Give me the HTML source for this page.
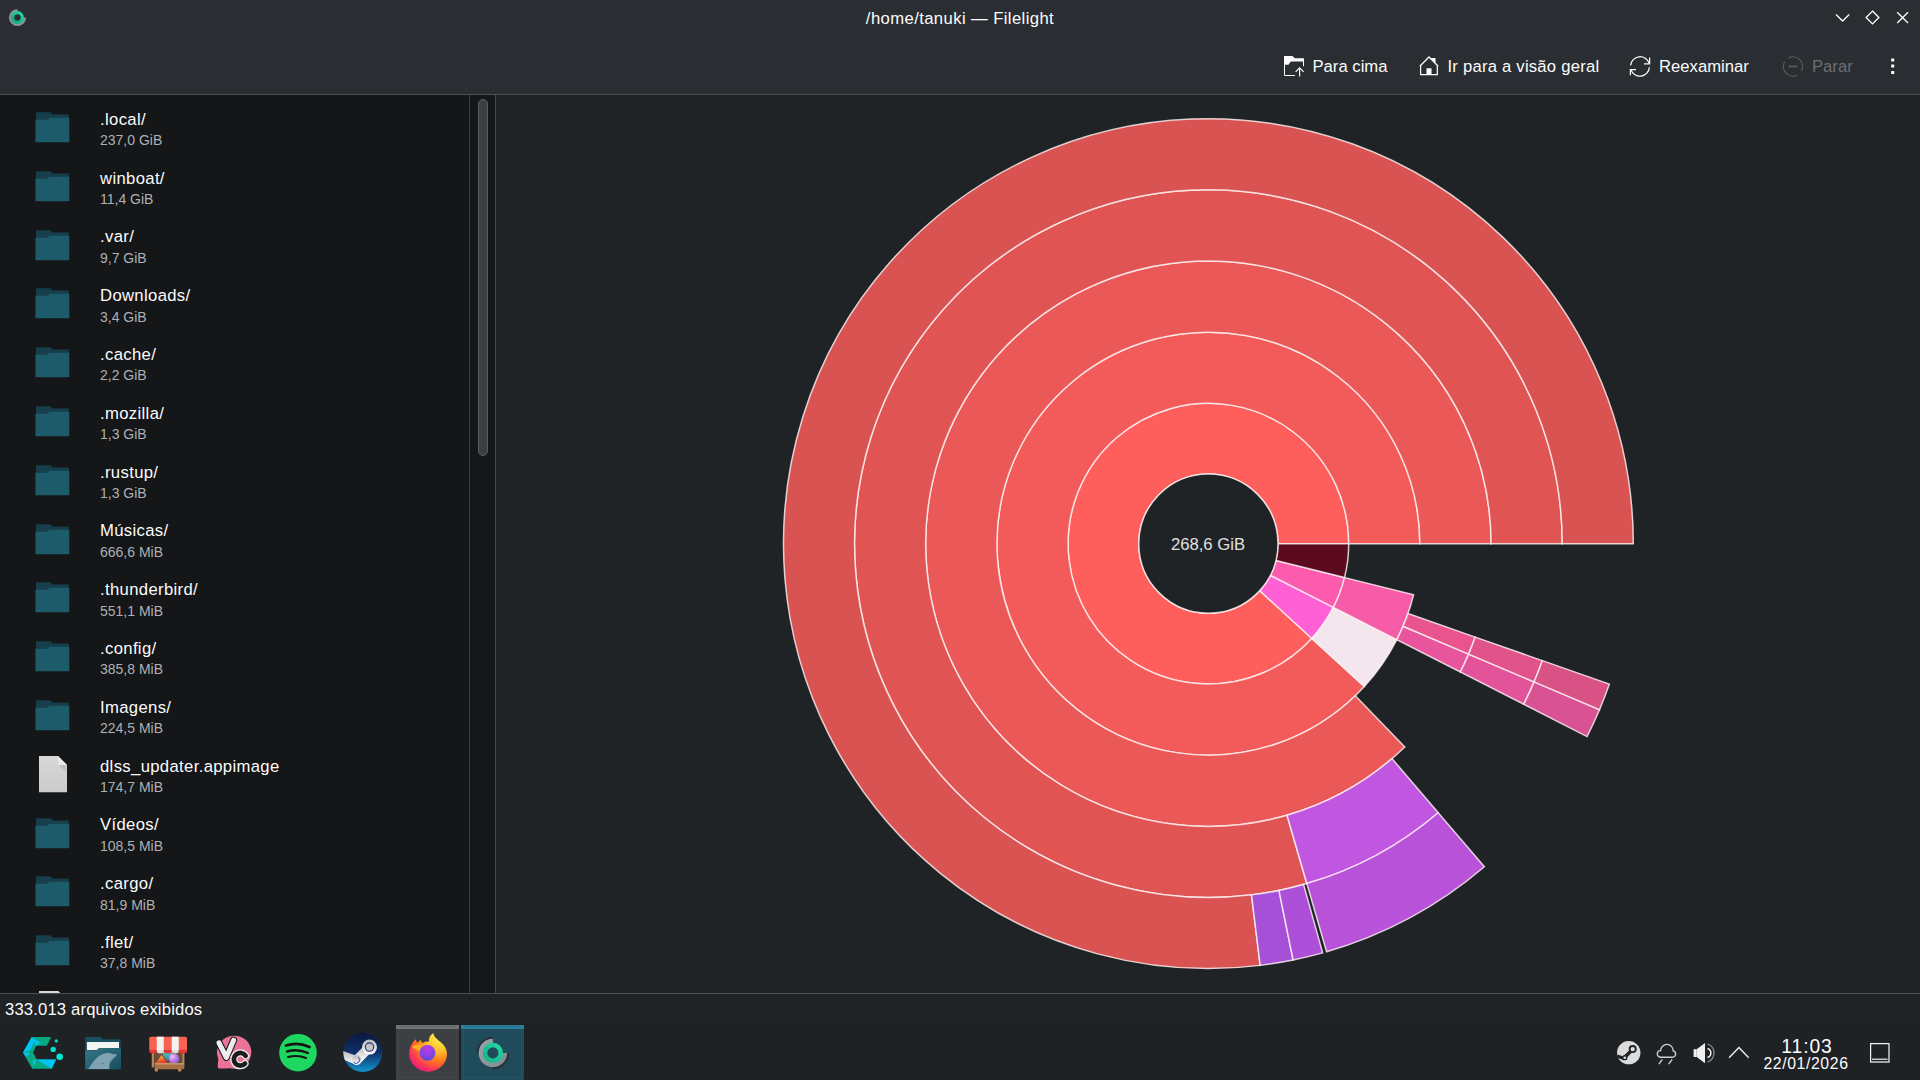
<!DOCTYPE html>
<html><head><meta charset="utf-8">
<style>
*{margin:0;padding:0;box-sizing:border-box}
html,body{width:1920px;height:1080px;overflow:hidden;background:#202326;font-family:"Liberation Sans",sans-serif;color:#fcfcfc}
.abs{position:absolute}
.t{position:absolute;white-space:nowrap;line-height:1.15;font-size:16.67px}
#hdr{left:0;top:0;width:1920px;height:94px;background:#2a2e32}
#hline{left:0;top:94px;width:1920px;height:1px;background:#4b4f54}
#list{left:0;top:95px;width:469px;height:898px;background:#141618;overflow:hidden}
#vl1{left:469px;top:95px;width:1px;height:898px;background:#3b3e42}
#sb{left:470px;top:95px;width:25px;height:898px;background:#161719}
#vl2{left:495px;top:95px;width:1px;height:898px;background:#45494d}
#thumb{left:478px;top:99px;width:9.6px;height:357px;border-radius:5px;background:#3d3e40;border:1px solid #5b5d5f}
#bline{left:0;top:993px;width:1920px;height:1px;background:#4b4f54}
#status{left:0;top:994px;width:1920px;height:86px;background:#202326}
.nm{position:absolute;left:100px;white-space:nowrap;font-size:16.67px;line-height:19px;letter-spacing:0.35px;color:#fcfcfc}
.sz{position:absolute;left:100px;white-space:nowrap;font-size:14px;line-height:16px;color:#adb1b5}
.fold{position:absolute;left:35px;width:35px;height:31px}
.tb{position:absolute;top:57.1px;white-space:nowrap;font-size:16.67px;line-height:19px;color:#fcfcfc}
</style></head>
<body>
<div id="hdr" class="abs"></div>
<div id="hline" class="abs"></div>
<div id="list" class="abs"></div>
<div id="vl1" class="abs"></div>
<div id="sb" class="abs"></div>
<div id="vl2" class="abs"></div>
<div id="thumb" class="abs"></div>
<div id="bline" class="abs"></div>
<div id="status" class="abs"></div>

<!-- title bar -->
<svg class="abs" style="left:0;top:0" width="36" height="36" viewBox="0 0 36 36">
  <defs><linearGradient id="apg" x1="1" y1="0" x2="0" y2="1"><stop offset="0" stop-color="#25e3b4"/><stop offset="1" stop-color="#0a9e72"/></linearGradient></defs>
  <path d="M17.5 8.9 A8.6 8.6 0 1 0 26.1 17.5 L17.5 17.5 Z" fill="#8a949b"/>
  <circle cx="17.5" cy="17.5" r="6.4" fill="url(#apg)"/>
  <circle cx="17.5" cy="17.5" r="3.2" fill="#2a2e32"/>
</svg>
<div class="t" style="left:0;width:1920px;top:9.2px;text-align:center;font-size:16.67px;letter-spacing:0.4px;color:#fcfcfc">/home/tanuki — Filelight</div>
<svg class="abs" style="left:1820px;top:0" width="100" height="35" viewBox="0 0 100 35" fill="none" stroke="#fcfcfc" stroke-width="1.35">
  <path d="M16 14.5 L22.6 21.1 L29.2 14.5"/>
  <path d="M52.5 11.1 L58.9 17.5 L52.5 23.9 L46.1 17.5 Z"/>
  <path d="M77.2 12.2 L88 23 M88 12.2 L77.2 23"/>
</svg>

<!-- toolbar -->
<svg class="abs" style="left:1284px;top:56px" width="21" height="21" viewBox="0 0 21 21">
  <path d="M0 0 H8.4 L10.9 2.2 H20 V5.6 H6.9 L4.4 8.75 H0 Z" fill="#fcfcfc"/>
  <path d="M0.5 8 V19.5 H10.9 M19.5 5 V10.3" fill="none" stroke="#fcfcfc" stroke-width="1"/><path d="M15.6 20.5 V12 M11.6 15.8 L15.6 11.8 L19.6 15.8" fill="none" stroke="#fcfcfc" stroke-width="1.2"/>
</svg>
<div class="tb" style="left:1312.5px">Para cima</div>
<svg class="abs" style="left:1419px;top:56px" width="21" height="21" viewBox="0 0 21 21">
  <path d="M0.8 10.2 L10 1.0 L19.2 10.2 M1.6 9.5 V18.7 H18.3 V9.5" fill="none" stroke="#fcfcfc" stroke-width="1.25"/>
  <path d="M12.2 3.2 V2 H16.5 V7.5 Z" fill="#fcfcfc"/>
  <rect x="7.5" y="12.3" width="5" height="6.6" fill="#fcfcfc"/>
</svg>
<div class="tb" style="left:1447.5px;letter-spacing:0.22px">Ir para a visão geral</div>
<svg class="abs" style="left:1629px;top:55.5px" width="22" height="21" viewBox="0 0 22 21" fill="none" stroke="#fcfcfc" stroke-width="1.25">
  <path d="M1.6 9.4 A9.5 9.5 0 0 1 20.1 7.3"/>
  <path d="M20.6 1.6 V7.8 H14.9"/>
  <path d="M20.4 11.2 A9.5 9.5 0 0 1 1.9 13.6"/>
  <path d="M1.4 19.2 V13.7 H7"/>
</svg>
<div class="tb" style="left:1659px">Reexaminar</div>
<svg class="abs" style="left:1782px;top:55.5px" width="22" height="22" viewBox="0 0 22 22" fill="none" stroke="#5b5d60" stroke-width="1.15">
  <path d="M6.35 2.1 A9.6 9.6 0 0 1 19.48 15.0"/>
  <path d="M15.5 18.98 A9.6 9.6 0 0 1 2.69 5.7"/>
  <rect x="6.7" y="9.6" width="8.7" height="1.7" fill="#5b5d60" stroke="none"/>
</svg>
<div class="tb" style="left:1812px;color:#6b6e71">Parar</div>
<svg class="abs" style="left:1888.5px;top:56.5px" width="7" height="18" viewBox="0 0 7 18" fill="#fcfcfc">
  <rect x="2.2" y="1.5" width="3" height="3"/>
  <rect x="2.2" y="7.5" width="3" height="3"/>
  <rect x="2.2" y="14" width="3" height="3"/>
</svg>

<!-- LIST -->
<div class="abs" style="left:0;top:95px;width:469px;height:898px;overflow:hidden"><div class="abs" style="left:0;top:-95px;width:469px;height:1080px"><svg class="fold" style="top:112.0px" width="35" height="31" viewBox="0 0 35 31"><path d="M1 0.3 H15.5 L17.5 2.6 H33.8 V12 H1 Z" fill="#163e4b"/><path d="M0.4 7.8 H12 L14.6 5.8 H34.3 V30.3 H0.4 Z" fill="#1d5a6a"/></svg>
<div class="nm" style="top:109.8px">.local/</div>
<div class="sz" style="top:132.2px">237,0 GiB</div>
<svg class="fold" style="top:170.8px" width="35" height="31" viewBox="0 0 35 31"><path d="M1 0.3 H15.5 L17.5 2.6 H33.8 V12 H1 Z" fill="#163e4b"/><path d="M0.4 7.8 H12 L14.6 5.8 H34.3 V30.3 H0.4 Z" fill="#1d5a6a"/></svg>
<div class="nm" style="top:168.6px">winboat/</div>
<div class="sz" style="top:191.0px">11,4 GiB</div>
<svg class="fold" style="top:229.6px" width="35" height="31" viewBox="0 0 35 31"><path d="M1 0.3 H15.5 L17.5 2.6 H33.8 V12 H1 Z" fill="#163e4b"/><path d="M0.4 7.8 H12 L14.6 5.8 H34.3 V30.3 H0.4 Z" fill="#1d5a6a"/></svg>
<div class="nm" style="top:227.4px">.var/</div>
<div class="sz" style="top:249.8px">9,7 GiB</div>
<svg class="fold" style="top:288.4px" width="35" height="31" viewBox="0 0 35 31"><path d="M1 0.3 H15.5 L17.5 2.6 H33.8 V12 H1 Z" fill="#163e4b"/><path d="M0.4 7.8 H12 L14.6 5.8 H34.3 V30.3 H0.4 Z" fill="#1d5a6a"/></svg>
<div class="nm" style="top:286.2px">Downloads/</div>
<div class="sz" style="top:308.6px">3,4 GiB</div>
<svg class="fold" style="top:347.2px" width="35" height="31" viewBox="0 0 35 31"><path d="M1 0.3 H15.5 L17.5 2.6 H33.8 V12 H1 Z" fill="#163e4b"/><path d="M0.4 7.8 H12 L14.6 5.8 H34.3 V30.3 H0.4 Z" fill="#1d5a6a"/></svg>
<div class="nm" style="top:345.0px">.cache/</div>
<div class="sz" style="top:367.4px">2,2 GiB</div>
<svg class="fold" style="top:406.0px" width="35" height="31" viewBox="0 0 35 31"><path d="M1 0.3 H15.5 L17.5 2.6 H33.8 V12 H1 Z" fill="#163e4b"/><path d="M0.4 7.8 H12 L14.6 5.8 H34.3 V30.3 H0.4 Z" fill="#1d5a6a"/></svg>
<div class="nm" style="top:403.8px">.mozilla/</div>
<div class="sz" style="top:426.2px">1,3 GiB</div>
<svg class="fold" style="top:464.8px" width="35" height="31" viewBox="0 0 35 31"><path d="M1 0.3 H15.5 L17.5 2.6 H33.8 V12 H1 Z" fill="#163e4b"/><path d="M0.4 7.8 H12 L14.6 5.8 H34.3 V30.3 H0.4 Z" fill="#1d5a6a"/></svg>
<div class="nm" style="top:462.6px">.rustup/</div>
<div class="sz" style="top:485.0px">1,3 GiB</div>
<svg class="fold" style="top:523.6px" width="35" height="31" viewBox="0 0 35 31"><path d="M1 0.3 H15.5 L17.5 2.6 H33.8 V12 H1 Z" fill="#163e4b"/><path d="M0.4 7.8 H12 L14.6 5.8 H34.3 V30.3 H0.4 Z" fill="#1d5a6a"/></svg>
<div class="nm" style="top:521.4px">Músicas/</div>
<div class="sz" style="top:543.8px">666,6 MiB</div>
<svg class="fold" style="top:582.4px" width="35" height="31" viewBox="0 0 35 31"><path d="M1 0.3 H15.5 L17.5 2.6 H33.8 V12 H1 Z" fill="#163e4b"/><path d="M0.4 7.8 H12 L14.6 5.8 H34.3 V30.3 H0.4 Z" fill="#1d5a6a"/></svg>
<div class="nm" style="top:580.2px">.thunderbird/</div>
<div class="sz" style="top:602.6px">551,1 MiB</div>
<svg class="fold" style="top:641.2px" width="35" height="31" viewBox="0 0 35 31"><path d="M1 0.3 H15.5 L17.5 2.6 H33.8 V12 H1 Z" fill="#163e4b"/><path d="M0.4 7.8 H12 L14.6 5.8 H34.3 V30.3 H0.4 Z" fill="#1d5a6a"/></svg>
<div class="nm" style="top:639.0px">.config/</div>
<div class="sz" style="top:661.4px">385,8 MiB</div>
<svg class="fold" style="top:700.0px" width="35" height="31" viewBox="0 0 35 31"><path d="M1 0.3 H15.5 L17.5 2.6 H33.8 V12 H1 Z" fill="#163e4b"/><path d="M0.4 7.8 H12 L14.6 5.8 H34.3 V30.3 H0.4 Z" fill="#1d5a6a"/></svg>
<div class="nm" style="top:697.8px">Imagens/</div>
<div class="sz" style="top:720.2px">224,5 MiB</div>
<svg class="abs" style="left:38.5px;top:755.5px" width="28" height="37" viewBox="0 0 28 37"><defs><linearGradient id="fgr11" x1="0" y1="0" x2="0" y2="1"><stop offset="0" stop-color="#d8d8d8"/><stop offset="1" stop-color="#cbcbcb"/></linearGradient></defs><path d="M0 0 H19 L28 9 V36.2 H0 Z" fill="url(#fgr11)"/><path d="M19 9 H28 L27 16 Z" fill="#b9b9b9" opacity="0.7"/><path d="M19 0 V9 H28 Z" fill="#e9e9e9"/></svg>
<div class="nm" style="top:756.6px">dlss_updater.appimage</div>
<div class="sz" style="top:779.0px">174,7 MiB</div>
<svg class="fold" style="top:817.6px" width="35" height="31" viewBox="0 0 35 31"><path d="M1 0.3 H15.5 L17.5 2.6 H33.8 V12 H1 Z" fill="#163e4b"/><path d="M0.4 7.8 H12 L14.6 5.8 H34.3 V30.3 H0.4 Z" fill="#1d5a6a"/></svg>
<div class="nm" style="top:815.4px">Vídeos/</div>
<div class="sz" style="top:837.8px">108,5 MiB</div>
<svg class="fold" style="top:876.4px" width="35" height="31" viewBox="0 0 35 31"><path d="M1 0.3 H15.5 L17.5 2.6 H33.8 V12 H1 Z" fill="#163e4b"/><path d="M0.4 7.8 H12 L14.6 5.8 H34.3 V30.3 H0.4 Z" fill="#1d5a6a"/></svg>
<div class="nm" style="top:874.2px">.cargo/</div>
<div class="sz" style="top:896.6px">81,9 MiB</div>
<svg class="fold" style="top:935.2px" width="35" height="31" viewBox="0 0 35 31"><path d="M1 0.3 H15.5 L17.5 2.6 H33.8 V12 H1 Z" fill="#163e4b"/><path d="M0.4 7.8 H12 L14.6 5.8 H34.3 V30.3 H0.4 Z" fill="#1d5a6a"/></svg>
<div class="nm" style="top:933.0px">.flet/</div>
<div class="sz" style="top:955.4px">37,8 MiB</div>
<svg class="abs" style="left:38.5px;top:990.7px" width="28" height="37" viewBox="0 0 28 37"><defs><linearGradient id="fgr15" x1="0" y1="0" x2="0" y2="1"><stop offset="0" stop-color="#d8d8d8"/><stop offset="1" stop-color="#cbcbcb"/></linearGradient></defs><path d="M0 0 H19 L28 9 V36.2 H0 Z" fill="url(#fgr15)"/><path d="M19 9 H28 L27 16 Z" fill="#b9b9b9" opacity="0.7"/><path d="M19 0 V9 H28 Z" fill="#e9e9e9"/></svg></div></div>

<!-- CHART -->
<svg width="1920" height="1080" style="position:absolute;left:0;top:0"><g stroke="rgba(255,245,245,0.8)" stroke-width="1.5" stroke-linejoin="miter"><path d="M1348.70 543.65A140.3 140.3 0 1 0 1311.84 638.44L1259.71 590.67A69.6 69.6 0 1 1 1278.00 543.65Z" fill="#fe5f5c"/><path d="M1311.84 638.44A140.3 140.3 0 0 0 1333.41 607.34L1270.41 575.25A69.6 69.6 0 0 1 1259.71 590.67Z" fill="#ff60d6"/><path d="M1333.41 607.34A140.3 140.3 0 0 0 1344.53 577.59L1275.93 560.49A69.6 69.6 0 0 1 1270.41 575.25Z" fill="#fd5cae"/><path d="M1344.53 577.59A140.3 140.3 0 0 0 1348.70 543.65L1278.00 543.65A69.6 69.6 0 0 1 1275.93 560.49Z" fill="#5c0a1e"/><path d="M1419.85 543.65A211.45 211.45 0 1 0 1364.30 686.50L1311.84 638.44A140.3 140.3 0 1 1 1348.70 543.65Z" fill="#f35b5a"/><path d="M1364.30 686.50A211.45 211.45 0 0 0 1396.80 639.65L1333.41 607.34A140.3 140.3 0 0 1 1311.84 638.44Z" fill="#f3e6ee"/><path d="M1396.80 639.65A211.45 211.45 0 0 0 1413.57 594.80L1344.53 577.59A140.3 140.3 0 0 1 1333.41 607.34Z" fill="#f55ba6"/><path d="M1491.10 543.65A282.7 282.7 0 1 0 1404.78 747.01L1355.29 695.75A211.45 211.45 0 1 1 1419.85 543.65Z" fill="#ea5857"/><path d="M1460.29 671.99A282.7 282.7 0 0 0 1468.63 654.11L1403.04 626.27A211.45 211.45 0 0 1 1396.80 639.65Z" fill="#e8559d"/><path d="M1468.63 654.11A282.7 282.7 0 0 0 1475.21 637.09L1407.97 613.54A211.45 211.45 0 0 1 1403.04 626.27Z" fill="#e9548e"/><path d="M1562.25 543.65A353.85 353.85 0 1 0 1306.82 883.54L1287.03 815.19A282.7 282.7 0 1 1 1491.10 543.65Z" fill="#e15454"/><path d="M1306.82 883.54A353.85 353.85 0 0 0 1438.21 812.72L1392.00 758.62A282.7 282.7 0 0 1 1287.03 815.19Z" fill="#c156e0"/><path d="M1523.68 704.29A353.85 353.85 0 0 0 1534.12 681.91L1468.63 654.11A282.7 282.7 0 0 1 1460.29 671.99Z" fill="#e2539a"/><path d="M1534.12 681.91A353.85 353.85 0 0 0 1542.36 660.60L1475.21 637.09A282.7 282.7 0 0 1 1468.63 654.11Z" fill="#e0538a"/><path d="M1633.30 543.65A424.9 424.9 0 1 0 1260.18 965.38L1251.52 894.86A353.85 353.85 0 1 1 1562.25 543.65Z" fill="#d85352"/><path d="M1260.18 965.38A424.9 424.9 0 0 0 1293.11 960.02L1278.95 890.40A353.85 353.85 0 0 1 1251.52 894.86Z" fill="#a650d8"/><path d="M1293.11 960.02A424.9 424.9 0 0 0 1322.66 952.90L1303.56 884.47A353.85 353.85 0 0 1 1278.95 890.40Z" fill="#ad4fd9"/><path d="M1326.59 951.78A424.9 424.9 0 0 0 1484.35 866.75L1438.21 812.72A353.85 353.85 0 0 1 1306.82 883.54Z" fill="#b853d9"/><path d="M1586.99 736.55A424.9 424.9 0 0 0 1599.52 709.67L1534.12 681.91A353.85 353.85 0 0 1 1523.68 704.29Z" fill="#d95394"/><path d="M1599.52 709.67A424.9 424.9 0 0 0 1609.42 684.09L1542.36 660.60A353.85 353.85 0 0 1 1534.12 681.91Z" fill="#d85286"/></g><circle cx="1208.4" cy="543.65" r="69.6" fill="#202326" stroke="rgba(255,245,245,0.8)" stroke-width="1.5"/></svg>
<div class="t" style="left:1108px;width:200px;top:535px;text-align:center;color:#e0e0e0">268,6 GiB</div>

<!-- status -->
<div class="t" style="left:5px;top:1000.3px;letter-spacing:0.15px">333.013 arquivos exibidos</div>

<!-- taskbar -->
<div class="abs" style="left:0;top:1025px;width:1920px;height:55px;background:#1f2225"></div>
<div class="abs" style="left:0;top:1021px;width:1920px;height:4px;background:linear-gradient(to bottom,rgba(0,0,0,0),rgba(0,0,0,0.07))"></div>
<!-- C hex icon -->
<svg class="abs" style="left:18px;top:1030px" width="50" height="45" viewBox="0 0 50 45">
  <path d="M13.75 7.1 H33.3 L28.75 15.8 H18.3 L15 22.5 L18.75 29.6 H38.1 L33.75 38.75 H14.2 L5 22.5 Z" fill="#0aa882"/>
  <path d="M13.75 7.1 L5 22.5 L12.5 20 L17 10 Z" fill="#00c4f5"/>
  <path d="M14.5 8 L22.5 12.5 L18.3 15.8 Z" fill="#00c4f5"/>
  <path d="M18.75 29.6 H38.1 L33.75 38.75 Z" fill="#00c4f5"/>
  <path d="M18.75 29.6 L14.8 38 L15.2 30.5 Z" fill="#00c4f5"/>
  <path d="M5 22.5 L12.5 23 L8 27 Z" fill="#00c4f5"/>
  <circle cx="38.3" cy="11" r="1.7" fill="#00d8c8"/>
  <circle cx="35.2" cy="19.4" r="2.7" fill="#00e0cc"/>
  <circle cx="41.7" cy="26.7" r="3.3" fill="#00e8cc"/>
</svg>
<!-- dolphin -->
<svg class="abs" style="left:80px;top:1030px" width="50" height="45" viewBox="0 0 50 45">
  <defs><linearGradient id="dg" x1="0" y1="0" x2="1" y2="1"><stop offset="0" stop-color="#357787"/><stop offset="1" stop-color="#174e60"/></linearGradient></defs>
  <path d="M5.2 6.9 H20.8 L22.5 9.2 H40.6 V39.2 H5.2 Z" fill="#18505f"/>
  <path d="M6.9 12.1 H39 V17.9 H19 L17 20 H6.9 Z" fill="#f4f4f4"/>
  <path d="M5.2 20.4 H16.7 L19.2 18.1 H41 V39.2 H5.2 Z" fill="url(#dg)"/>
  <path d="M8.3 39 C13 31 18 24.5 25.5 23.2 C29 22.6 31.5 23.5 33.5 24.3 C35 24.2 36 24 36.8 24.6 C36.5 26 35.5 27 34 28 C32 30 30 32 29.5 34 L29.2 39 Z" fill="#7fa3b0"/><path d="M28 32 L35 26" stroke="#6a8e9b" stroke-width="0.5"/>
  <circle cx="22.7" cy="33.5" r="0.8" fill="#3d6b7a"/>
</svg>
<!-- store -->
<svg class="abs" style="left:143px;top:1030px" width="50" height="45" viewBox="0 0 50 45">
  <rect x="8.75" y="22" width="2.2" height="15.5" fill="#b8875a"/>
  <rect x="39.2" y="22" width="2.2" height="15.5" fill="#b8875a"/>
  <rect x="11" y="22" width="28.2" height="11" fill="#6e4c30"/>
  <defs><linearGradient id="stt" x1="0" y1="0" x2="0.3" y2="1"><stop offset="0" stop-color="#ffd43a"/><stop offset="1" stop-color="#ee3a2a"/></linearGradient>
  <linearGradient id="stb" x1="0" y1="0" x2="0" y2="1"><stop offset="0" stop-color="#72d6a6"/><stop offset="1" stop-color="#2a86b8"/></linearGradient>
  <radialGradient id="sts" cx="0.35" cy="0.3" r="0.75"><stop offset="0" stop-color="#f2c6ff"/><stop offset="0.5" stop-color="#c47ae6"/><stop offset="1" stop-color="#7a64e0"/></radialGradient></defs>
  <path d="M19.6 23.5 A5 4.5 0 0 1 29.6 23.5 C29.6 26.5 26.5 29 24.6 30.8 C22.7 29 19.6 26.5 19.6 23.5 Z" fill="url(#stb)"/>
  <path d="M12.9 32.9 L18.5 25 L24.2 32.9 Z" fill="url(#stt)"/>
  <circle cx="31" cy="28.7" r="5.2" fill="url(#sts)"/>
  <rect x="11.5" y="32.9" width="29.5" height="6.3" rx="1" fill="#a87248"/>
  <rect x="11.5" y="32.9" width="29.5" height="1.6" fill="#c59466"/>
  <circle cx="13.3" cy="40" r="1.8" fill="#b8875a"/>
  <circle cx="36.7" cy="40" r="1.8" fill="#b8875a"/>
  <path d="M6.25 8.5 Q6.25 6.7 8 6.7 H42.3 Q44 6.7 44 8.5 V20 H6.25 Z" fill="#f96352"/>
  <rect x="13.75" y="6.7" width="7" height="13.3" fill="#f4f2f0"/>
  <rect x="28.75" y="6.7" width="7" height="13.3" fill="#f4f2f0"/>
  <path d="M6.25 20 H13.75 V21 A3.75 2.5 0 0 1 6.25 21 Z" fill="#ee3338"/>
  <path d="M13.75 20 H20.8 V21 A3.5 2.5 0 0 1 13.75 21 Z" fill="#e0dcd8"/>
  <path d="M20.8 20 H28.75 V21 A3.95 2.5 0 0 1 20.8 21 Z" fill="#ee3338"/>
  <path d="M28.75 20 H35.8 V21 A3.5 2.5 0 0 1 28.75 21 Z" fill="#e0dcd8"/>
  <path d="M35.8 20 H44 V21 A4.1 2.5 0 0 1 35.8 21 Z" fill="#ee3338"/>
</svg>
<!-- VC -->
<svg class="abs" style="left:210px;top:1030px" width="50" height="45" viewBox="0 0 50 45">
  <path d="M23.5 5.8 A16.5 16.5 0 1 1 22 38.5 C17 37.5 13 39.5 8 38 C7 34 9 31 8 28 A16.5 16.5 0 0 1 23.5 5.8 Z" fill="#ec7298"/>
  <path d="M9 12.8 L16.3 27.4 L23.6 10.2" fill="none" stroke="#1b1b1b" stroke-width="7.2" stroke-linecap="round" stroke-linejoin="round"/>
  <path d="M9 12.8 L16.3 27.4 L23.6 10.2" fill="none" stroke="#ececec" stroke-width="5" stroke-linecap="round" stroke-linejoin="round"/>
  <path d="M35.6 25.8 A6.4 6.4 0 1 0 35 33.6" fill="none" stroke="#f0f0f0" stroke-width="7.2" stroke-linecap="round"/>
  <path d="M35.6 25.8 A6.4 6.4 0 1 0 35 33.6" fill="none" stroke="#1d1d1d" stroke-width="4.8" stroke-linecap="round"/>
</svg>
<!-- spotify -->
<svg class="abs" style="left:278px;top:1033px" width="40" height="40" viewBox="0 0 40 40">
  <circle cx="20" cy="19.7" r="18.8" fill="#1ed760"/>
  <path d="M8 12.5 Q20 8.5 31.5 14" fill="none" stroke="#191414" stroke-width="2.8" stroke-linecap="round"/>
  <path d="M9 18.5 Q20 15.5 30 20" fill="none" stroke="#191414" stroke-width="2.4" stroke-linecap="round"/>
  <path d="M10 24 Q20 21.5 28 25" fill="none" stroke="#191414" stroke-width="2" stroke-linecap="round"/>
</svg>
<!-- steam -->
<svg class="abs" style="left:342px;top:1032px" width="42" height="42" viewBox="0 0 42 42">
  <defs><linearGradient id="sg" x1="0" y1="0" x2="0" y2="1"><stop offset="0" stop-color="#0a1840"/><stop offset="0.5" stop-color="#0f2f68"/><stop offset="1" stop-color="#1394d0"/></linearGradient>
  <linearGradient id="sw" x1="0" y1="0" x2="0" y2="1"><stop offset="0" stop-color="#b9b9b9"/><stop offset="1" stop-color="#ffffff"/></linearGradient>
  <clipPath id="sc"><circle cx="20.8" cy="20.5" r="19.5"/></clipPath></defs>
  <circle cx="20.8" cy="20.5" r="19.5" fill="url(#sg)"/>
  <g clip-path="url(#sc)" fill="url(#sw)">
    <path d="M0 18.6 L16.5 24.5 L14.7 33 L0 27.2 Z"/>
    <path d="M27.5 15.1 L14.7 28.1" stroke="url(#sw)" stroke-width="9.5" stroke-linecap="round"/>
    <circle cx="27.5" cy="15.1" r="7.5"/>
    <circle cx="14.7" cy="28.1" r="4.9"/>
  </g>
  <circle cx="27.5" cy="15.1" r="4.2" fill="#c4c4c4" stroke="#1b3677" stroke-width="1.1"/>
  <path d="M11.8 30.6 A3.3 3.3 0 1 0 16.3 25.2" fill="none" stroke="#234e96" stroke-width="1"/>
</svg>
<!-- firefox button -->
<div class="abs" style="left:396px;top:1025px;width:63px;height:55px;background:#3d4043"></div>
<div class="abs" style="left:398px;top:1029px;width:59px;height:49px;border:1px solid #434649;border-top:none"></div>
<div class="abs" style="left:396px;top:1025px;width:63px;height:4px;background:#717375"></div>
<div class="abs" style="left:400px;top:1026.3px;width:55px;height:1.2px;background:#5f6164"></div>
<svg class="abs" style="left:408px;top:1032px" width="40" height="40" viewBox="0 0 40 40">
  <defs>
    <radialGradient id="ff1" cx="0.8" cy="0.1" r="1.05"><stop offset="0" stop-color="#fff44f"/><stop offset="0.35" stop-color="#ffbd2e"/><stop offset="0.6" stop-color="#ff7a1a"/><stop offset="0.8" stop-color="#ff3a55"/><stop offset="1" stop-color="#e3138a"/></radialGradient>
    <radialGradient id="ff2" cx="0.5" cy="0.25" r="0.8"><stop offset="0" stop-color="#c23ae8"/><stop offset="1" stop-color="#5a4bd8"/></radialGradient>
  </defs>
  <path d="M20 39.7 C9.5 39.7 1.2 31.5 1.2 21.5 C1.2 15.5 4 10.5 7.8 7.2 C8 9.5 9 10.5 10 11 C10.5 9.5 11.5 8.5 12.8 8 C13 9.5 13.8 10.5 15 11 C17 9.5 19 9.3 21 9.6 C20.5 6 22 3 25.3 0.9 C26 5 29 6.5 31 9 L30.7 8.4 C36 12 39 17 39 22 C39 31.5 30.5 39.7 20 39.7 Z" fill="url(#ff1)"/>
  <circle cx="19.5" cy="20.8" r="7.9" fill="url(#ff2)"/>
  <path d="M4 15 C7 12.5 11 12 14.5 14 C12.5 15.5 11.8 17 12 19 C9 18 6 17 4 15 Z" fill="#ffb020"/>
</svg>
<!-- filelight button -->
<div class="abs" style="left:461px;top:1025px;width:63px;height:55px;background:#1f4b5b"></div>
<div class="abs" style="left:463px;top:1029px;width:59px;height:49px;border:1px solid #245465;border-top:none"></div>
<div class="abs" style="left:461px;top:1025px;width:63px;height:4px;background:#2a809a"></div>
<div class="abs" style="left:465px;top:1026.3px;width:55px;height:1.2px;background:#246f87"></div>
<svg class="abs" style="left:473px;top:1033px" width="40" height="40" viewBox="0 0 40 40">
  <defs><linearGradient id="flg" x1="1" y1="0" x2="0" y2="1"><stop offset="0" stop-color="#22dcae"/><stop offset="1" stop-color="#10b07c"/></linearGradient>
  <linearGradient id="fgg" x1="0" y1="0" x2="1" y2="1"><stop offset="0" stop-color="#9aa5ab"/><stop offset="1" stop-color="#7f8a90"/></linearGradient></defs>
  <path d="M3.65 19.9 A16.25 16.25 0 0 1 19.9 3.65 V5.7 A14.2 14.2 0 0 0 5.7 19.9 Z" fill="#2b2f33"/>
  <path d="M36.15 19.9 A16.25 16.25 0 0 1 19.9 36.15 V34.1 A14.2 14.2 0 0 0 34.1 19.9 Z" fill="#2b2f33"/>
  <path d="M19.9 5.7 A14.2 14.2 0 1 0 34.1 19.9 L19.9 19.9 Z" fill="url(#fgg)"/>
  <circle cx="19.9" cy="19.9" r="10.1" fill="url(#flg)"/>
  <circle cx="19.9" cy="19.9" r="5.6" fill="#1f4b5b"/>
</svg>

<!-- tray -->
<svg class="abs" style="left:1610px;top:1030px" width="150" height="45" viewBox="0 0 150 45">
  <circle cx="18.75" cy="22.65" r="11.7" fill="#dcdcdc"/>
  <path d="M7.2 26 L14.5 28.8" stroke="#202326" stroke-width="3.2"/>
  <path d="M15 27 L22.5 19.5" stroke="#202326" stroke-width="3.5" stroke-linecap="round"/>
  <circle cx="22.7" cy="19.1" r="4" fill="#202326"/>
  <circle cx="22.7" cy="19.1" r="2.2" fill="#dcdcdc"/>
  <circle cx="14.8" cy="27.7" r="2.6" fill="#202326"/>
  <circle cx="14.8" cy="27.7" r="1.3" fill="#dcdcdc"/>
  <path d="M50.6 27.2 H62.6 A3.2 3.2 0 0 0 63.2 20.9 A6.3 6.3 0 0 0 50.6 20.6 A3.3 3.3 0 0 0 50.6 27.2 Z" fill="none" stroke="#cfcfcf" stroke-width="1.35"/>
  <path d="M52 29.8 L49.2 33.7 M61.8 29.8 L59 33.7" stroke="#cfcfcf" stroke-width="1.4" stroke-linecap="round"/>
  <path d="M83.6 19.2 H86.7 V27 H83.6 Z" fill="#f0f0f0"/>
  <path d="M86.7 19.2 L95 12.9 V33.2 L86.7 27 Z" fill="#f0f0f0"/>
  <path d="M97.5 18.5 A4.7 4.7 0 0 1 97.5 27.5" fill="none" stroke="#f0f0f0" stroke-width="1.5"/>
  <path d="M97.5 14 A9.5 9.5 0 0 1 97.5 32" fill="none" stroke="#8a8c8e" stroke-width="1.3"/>
  <path d="M119.1 27.7 L128.9 17.6 L138.7 27.7" fill="none" stroke="#f0f0f0" stroke-width="1.4"/>
</svg>
<div class="abs" style="left:1701px;top:1035.5px;width:212px;text-align:center;font-size:19.3px;line-height:22px;letter-spacing:0.9px;white-space:nowrap;color:#fcfcfc">11:03</div>
<div class="abs" style="left:1700px;top:1054.5px;width:212px;text-align:center;font-size:15.8px;line-height:18px;letter-spacing:0.6px;white-space:nowrap;color:#fcfcfc">22/01/2026</div>
<svg class="abs" style="left:1869px;top:1042px" width="22" height="22" viewBox="0 0 22 22">
  <rect x="1.6" y="1.6" width="18.4" height="18.4" fill="none" stroke="#f0f0f0" stroke-width="1.25"/>
  <rect x="3" y="16.6" width="15.5" height="1.2" fill="#f0f0f0"/>
</svg>

</body></html>
